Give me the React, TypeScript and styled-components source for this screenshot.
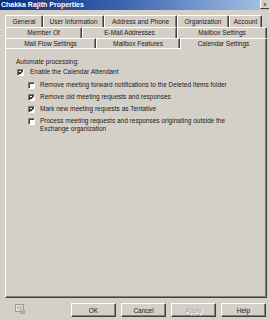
import styled, { createGlobalStyle } from "styled-components";

const GlobalStyle = createGlobalStyle`
  body {
    margin: 0;
    background: #d4d0c8;
    font-family: "Liberation Sans", Arial, sans-serif;
    font-size: 6.5px;
    color: #111;
  }
`;

const Window = styled.div`
  width: 269px;
  height: 320px;
  display: flex;
  flex-direction: column;
  background: #d4d0c8;
  overflow: hidden;
`;

const TitleBar = styled.div`
  height: 10px;
  display: flex;
  align-items: center;
  justify-content: space-between;
  padding-left: 1px;
  background: linear-gradient(to right, #0c2a78 0%, #3a64b0 45%, #a9c4e6 100%);
  color: #fff;
  font-weight: bold;
  font-size: 7px;
  line-height: 10px;
`;

const CloseButton = styled.span`
  width: 8px;
  height: 8px;
  margin-top: -1px;
  display: flex;
  align-items: center;
  justify-content: center;
  background: #d4d0c8;
  border-left: 1px solid #fff;
  border-bottom: 1px solid #404040;
  color: #000;
  font-weight: normal;
  font-size: 6px;
`;

const Body = styled.div`
  flex: 1;
  display: flex;
  flex-direction: column;
  padding: 5px 2px 0 5px;
`;

const TabRow = styled.div<{ $h: number }>`
  height: ${(p) => p.$h}px;
  display: flex;
`;

const Tab = styled.div<{ $w: number; $active?: boolean }>`
  width: ${(p) => p.$w}px;
  height: ${(p) => (p.$active ? "calc(100% + 1px)" : "100%")};
  box-sizing: border-box;
  display: flex;
  align-items: center;
  justify-content: center;
  padding-bottom: ${(p) => (p.$active ? 1 : 0)}px;
  border-top: 1px solid #fff;
  border-left: 1px solid #fff;
  border-right: 1px solid #404040;
  box-shadow: inset -1px 0 #808080;
  border-radius: 1px 1px 0 0;
  line-height: 8px;
  color: #1a1a1a;
  white-space: nowrap;
  background: #d4d0c8;
  position: ${(p) => (p.$active ? "relative" : "static")};
  z-index: ${(p) => (p.$active ? 1 : "auto")};
`;

const Panel = styled.div`
  height: 250px;
  box-sizing: border-box;
  border-top: 1px solid #fff;
  border-left: 1px solid #fff;
  border-right: 1px solid #404040;
  border-bottom: 1px solid #404040;
  box-shadow: inset -1px -1px #808080;
  padding: 9px 0 0 10px;
  display: flex;
  flex-direction: column;
`;

const SectionLabel = styled.div`
  line-height: 8px;
  color: #1a1a1a;
`;

const CheckRow = styled.label<{ $indent?: number; $gap: number; $top?: number }>`
  display: flex;
  align-items: flex-start;
  gap: ${(p) => p.$gap}px;
  margin-top: ${(p) => p.$top ?? 0}px;
  padding-left: ${(p) => p.$indent ?? 1}px;
  line-height: 8px;
  color: #1a1a1a;
`;

const Box = styled.span`
  width: 7px;
  height: 7px;
  flex: none;
  box-sizing: border-box;
  margin-top: 0.5px;
  background: #fff;
  border-top: 1px solid #808080;
  border-left: 1px solid #808080;
  border-right: 1px solid #fff;
  border-bottom: 1px solid #fff;
  box-shadow: inset 1px 1px #404040;
  display: flex;
  align-items: center;
  justify-content: center;
`;

const CheckLabel = styled.span<{ $max?: number }>`
  max-width: ${(p) => p.$max ?? 240}px;
`;

const SubList = styled.div`
  display: flex;
  flex-direction: column;
  gap: 4px;
  margin-top: 5px;
`;

const Footer = styled.div`
  height: 22px;
  display: flex;
  align-items: flex-start;
  padding: 5px 1px 0 5px;
  box-sizing: border-box;
`;

const FooterIcon = styled.div`
  margin: 1px 0 0 5px;
  flex: 1;
`;

const Buttons = styled.div`
  display: flex;
  gap: 5px;
`;

const Button = styled.button<{ $disabled?: boolean }>`
  width: 45px;
  height: 14px;
  padding: 0;
  background: #d4d0c8;
  font: inherit;
  font-size: 6.5px;
  color: ${(p) => (p.$disabled ? "#a09d96" : "#1a1a1a")};
  text-shadow: ${(p) => (p.$disabled ? "1px 1px #fff" : "none")};
  border-top: 1px solid #fff;
  border-left: 1px solid #fff;
  border-right: 1px solid #404040;
  border-bottom: 1px solid #404040;
  box-shadow: inset -1px -1px #808080;
`;

function Check({ checked }: { checked: boolean }) {
  return (
    <Box>
      {checked && (
        <svg width="5" height="5" viewBox="0 0 5 5">
          <path d="M0.5 2.2 L2 3.7 L4.6 0.9" stroke="#000" strokeWidth="1.1" fill="none" />
        </svg>
      )}
    </Box>
  );
}

const rows: { h: number; tabs: { label: string; w: number; active?: boolean }[] }[] = [
  {
    h: 12,
    tabs: [
      { label: "General", w: 38 },
      { label: "User Information", w: 61 },
      { label: "Address and Phone", w: 73 },
      { label: "Organization", w: 52 },
      { label: "Account", w: 33 },
    ],
  },
  {
    h: 11,
    tabs: [
      { label: "Member Of", w: 77 },
      { label: "E-Mail Addresses", w: 95 },
      { label: "Mailbox Settings", w: 90 },
    ],
  },
  {
    h: 10,
    tabs: [
      { label: "Mail Flow Settings", w: 91 },
      { label: "Mailbox Features", w: 84 },
      { label: "Calendar Settings", w: 87, active: true },
    ],
  },
];

const options = [
  { label: "Remove meeting forward notifications to the Deleted Items folder", checked: false },
  { label: "Remove old meeting requests and responses", checked: true },
  { label: "Mark new meeting requests as Tentative", checked: true },
  {
    label: "Process meeting requests and responses originating outside the Exchange organization",
    checked: false,
  },
];

export default function App() {
  return (
    <Window>
      <GlobalStyle />
      <TitleBar>
        <span>Chakka Rajith Properties</span>
        <CloseButton>x</CloseButton>
      </TitleBar>
      <Body>
        {rows.map((row, i) => (
          <TabRow key={i} $h={row.h}>
            {row.tabs.map((t) => (
              <Tab key={t.label} $w={t.w} $active={t.active}>
                {t.label}
              </Tab>
            ))}
          </TabRow>
        ))}
        <Panel>
          <SectionLabel>Automate processing:</SectionLabel>
          <CheckRow $gap={6} $top={2}>
            <Check checked />
            <CheckLabel>Enable the Calendar Attendant</CheckLabel>
          </CheckRow>
          <SubList>
            {options.map((o) => (
              <CheckRow key={o.label} $indent={12} $gap={5}>
                <Check checked={o.checked} />
                <CheckLabel $max={200}>{o.label}</CheckLabel>
              </CheckRow>
            ))}
          </SubList>
        </Panel>
        <Footer>
          <FooterIcon>
            <svg width="10" height="10" viewBox="0 0 10 10">
              <rect x="0.5" y="0.5" width="8" height="7" fill="#e4e2dc" stroke="#9c9a94" />
              <rect x="2" y="2" width="5" height="3" fill="#c4c2bc" />
              <path d="M5 6 L9.5 6 L9.5 9.5 L5 9.5 Z" fill="#d8d6d0" stroke="#9c9a94" strokeWidth="0.8" />
              <path d="M6 7.2 L8.6 8.6 M8.6 7.2 L6 8.6" stroke="#8a8882" strokeWidth="0.7" />
            </svg>
          </FooterIcon>
          <Buttons>
            <Button>OK</Button>
            <Button>Cancel</Button>
            <Button $disabled>Apply</Button>
            <Button>Help</Button>
          </Buttons>
        </Footer>
      </Body>
    </Window>
  );
}
